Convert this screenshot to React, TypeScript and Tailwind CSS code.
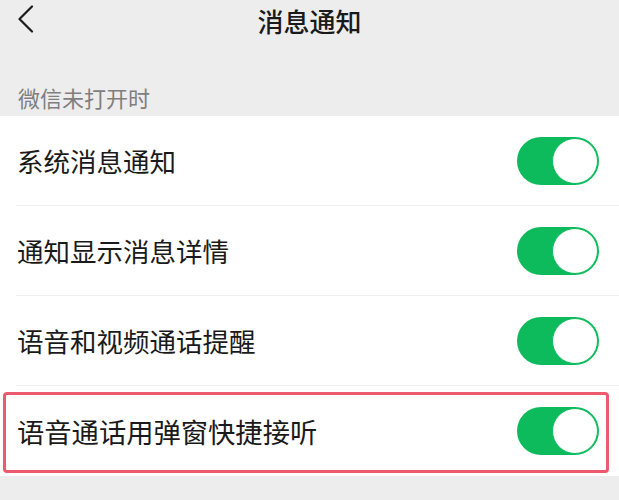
import React from 'react';

const rows = [
  { label: '系统消息通知' },
  { label: '通知显示消息详情' },
  { label: '语音和视频通话提醒' },
  { label: '语音通话用弹窗快捷接听', highlighted: true },
];

function Toggle() {
  return (
    <div className="w-[82px] h-[48px] rounded-full bg-[#0dbb5d] flex items-center justify-end p-[1px] shrink-0">
      <div className="w-[46px] h-[46px] rounded-full bg-white border-[1.5px] border-[#0dbb5d]" />
    </div>
  );
}

function BackIcon() {
  return (
    <svg width="17" height="28" viewBox="0 0 17 28" fill="none">
      <polyline
        points="15,1.5 2.5,14 15,26.5"
        stroke="#1c1c1c"
        strokeWidth="2.2"
        strokeLinecap="round"
        strokeLinejoin="round"
      />
    </svg>
  );
}

export default function App(): React.ReactElement {
  return (
    <div
      className="w-[619px] h-[500px] bg-[#ededed] overflow-hidden"
      style={{ fontFamily: '"Noto Sans CJK SC", "Noto Sans", sans-serif' }}
    >
      <div className="relative h-[42px] flex items-center justify-center">
        <div className="absolute left-[17px] top-[5px]">
          <BackIcon />
        </div>
        <h1 className="text-[26px] leading-[26px] font-medium text-[#1a1a1a]">消息通知</h1>
      </div>

      <div className="h-[74px] pl-[18px] pt-[44px] text-[22px] leading-[22px] text-[#7f7f7f]">
        微信未打开时
      </div>

      <div className="bg-white">
        {rows.map((row, i) => (
          <div key={row.label} className="relative">
            <div
              className={
                'ml-[16px] pl-[1px] pr-[20px] h-[90px] flex items-center justify-between ' +
                (i < rows.length - 1 ? 'border-b border-[#efefef]' : '')
              }
            >
              <span
                className={
                  row.highlighted
                    ? 'text-[27.3px] leading-[30px] text-[#1a1a1a]'
                    : 'text-[26.5px] leading-[28px] text-[#1a1a1a]'
                }
              >
                {row.label}
              </span>
              <Toggle />
            </div>
            {row.highlighted && (
              <div className="absolute left-[3px] right-[10px] top-[6px] bottom-[3px] border-[3px] border-[#ee5a6d] rounded-[4px] pointer-events-none" />
            )}
          </div>
        ))}
      </div>
    </div>
  );
}
